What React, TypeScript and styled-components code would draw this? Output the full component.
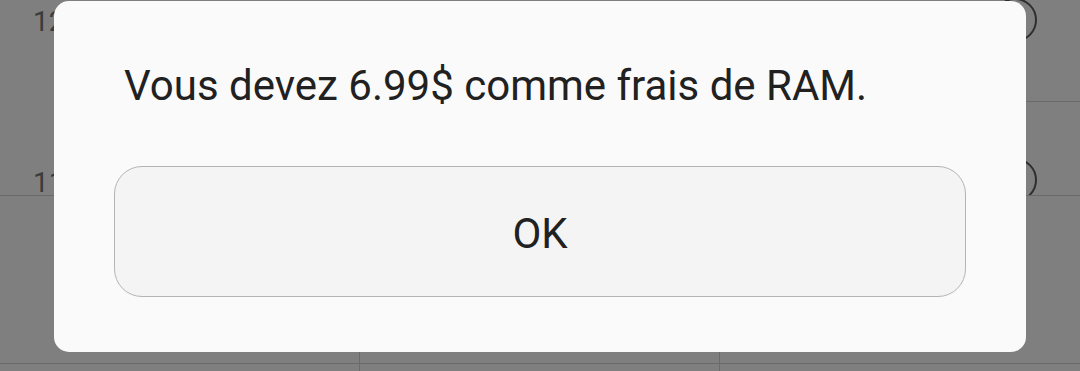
import React from "react";
import styled, { createGlobalStyle } from "styled-components";

const GlobalStyle = createGlobalStyle`
  html, body {
    margin: 0;
    padding: 0;
    background: #ffffff;
    font-family: Roboto, "Noto Sans", "Liberation Sans", sans-serif;
  }
`;

const Screen = styled.div`
  position: relative;
  width: 1080px;
  height: 371px;
  overflow: hidden;
  background: #ffffff;
`;

/* page behind the dialog */
const TopRow = styled.div`
  display: grid;
  grid-template-columns: 80px 1fr 110px;
  height: 195px;
  border-bottom: 1px solid #d4d4d4;
  overflow: hidden;
`;

const NumberColumn = styled.div`
  display: flex;
  flex-direction: column;
  justify-content: space-between;
  padding: 8px 0 0 33px;
`;

const RowNumber = styled.span<{ $last?: boolean }>`
  font-size: 28px;
  line-height: 28px;
  color: #767676;
  margin-bottom: ${(p) => (p.$last ? "-2px" : "0")};
`;

const TitleColumn = styled.div`
  padding-left: 120px;
`;

const ItemTitle = styled.div`
  margin-top: -30px;
  font-size: 32px;
  line-height: 32px;
  font-weight: 700;
  color: #ff5a1a;
  letter-spacing: 1px;
`;

const SelectColumn = styled.div`
  display: flex;
  flex-direction: column;
`;

const SelectCell = styled.div<{ $h: number; $offset: number; $divider?: boolean }>`
  height: ${(p) => p.$h}px;
  padding: ${(p) => p.$offset}px 0 0 23px;
  box-sizing: border-box;
  overflow: hidden;
  border-bottom: ${(p) => (p.$divider ? "1px solid #d4d4d4" : "none")};
`;

const RadioCircle = styled.div<{ $lift?: number }>`
  width: 44px;
  height: 44px;
  margin-top: ${(p) => -(p.$lift ?? 0)}px;
  box-sizing: border-box;
  border: 2px solid #5c5c5c;
  border-radius: 50%;
`;

const CellRow = styled.div<{ $h: number }>`
  display: grid;
  grid-template-columns: 360px 360px 1fr;
  height: ${(p) => p.$h}px;
  border-bottom: 1px solid #d4d4d4;
`;

const Cell = styled.div`
  border-right: 1px solid #d4d4d4;
  &:last-child {
    border-right: none;
  }
`;

/* dialog */
const Backdrop = styled.div`
  position: absolute;
  inset: 0;
  background: rgba(0, 0, 0, 0.5);
  display: flex;
  justify-content: center;
  align-items: flex-start;
  padding-top: 1px;
`;

const Dialog = styled.div`
  width: 972px;
  box-sizing: border-box;
  background: #fafafa;
  border-radius: 15px;
  padding: 60px 60px 55px;
  display: flex;
  flex-direction: column;
`;

const Message = styled.p`
  margin: 0 0 56px 10px;
  font-size: 42px;
  color: #212121;
  line-height: normal;
`;

const OkButton = styled.button`
  height: 131px;
  width: 100%;
  box-sizing: border-box;
  border: 1px solid #b4b4b4;
  border-radius: 28px;
  background: #f4f4f4;
  color: #212121;
  font-family: Roboto, "Noto Sans", "Liberation Sans", sans-serif;
  font-size: 42px;
  padding: 4px 0 0;
  display: flex;
  align-items: center;
  justify-content: center;
  cursor: pointer;
`;

export default function App() {
  return (
    <>
      <GlobalStyle />
      <Screen>
        <TopRow>
          <NumberColumn>
            <RowNumber>12</RowNumber>
            <RowNumber $last>11</RowNumber>
          </NumberColumn>
          <TitleColumn>
            <ItemTitle>FRAIS RAM À PAYER</ItemTitle>
          </TitleColumn>
          <SelectColumn>
            <SelectCell $h={102} $offset={0} $divider>
              <RadioCircle $lift={2} />
            </SelectCell>
            <SelectCell $h={93} $offset={56}>
              <RadioCircle />
            </SelectCell>
          </SelectColumn>
        </TopRow>
        <CellRow $h={167}>
          <Cell />
          <Cell />
          <Cell />
        </CellRow>
        <CellRow $h={120}>
          <Cell />
          <Cell />
          <Cell />
        </CellRow>

        <Backdrop>
          <Dialog>
            <Message>Vous devez 6.99$ comme frais de RAM.</Message>
            <OkButton>OK</OkButton>
          </Dialog>
        </Backdrop>
      </Screen>
    </>
  );
}
